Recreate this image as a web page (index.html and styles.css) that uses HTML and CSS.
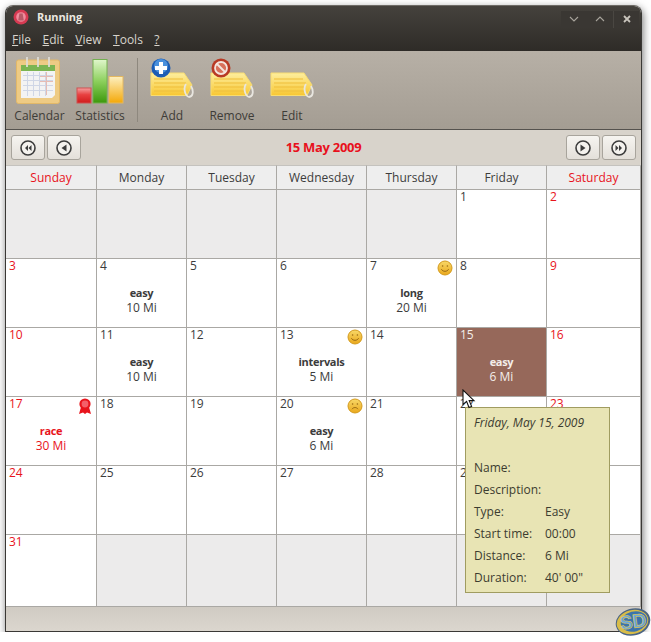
FILE: index.html
```html
<!DOCTYPE html>
<html lang="en">
<head>
    <meta charset="UTF-8">
    <meta name="viewport" content="width=device-width, initial-scale=1.0">
    <title>Running</title>
    <link rel="stylesheet" href="styles.css">
</head>
<body>
    <svg class="defs" width="0" height="0">
        <defs>
            <linearGradient id="tagFill" x1="0" y1="0" x2="0" y2="1">
                <stop offset="0" stop-color="#fdee9e"/>
                <stop offset="1" stop-color="#f8c733"/>
            </linearGradient>
            <linearGradient id="smile" x1="0" y1="0" x2="0" y2="1">
                <stop offset="0" stop-color="#f8d868"/>
                <stop offset="1" stop-color="#eaa81c"/>
            </linearGradient>
            <linearGradient id="barRed" x1="0" y1="0" x2="0" y2="1">
                <stop offset="0" stop-color="#f4a0a0"/>
                <stop offset=".45" stop-color="#e84040"/>
                <stop offset="1" stop-color="#d01c1c"/>
            </linearGradient>
            <linearGradient id="barGreen" x1="0" y1="0" x2="0" y2="1">
                <stop offset="0" stop-color="#e0f6cc"/>
                <stop offset=".5" stop-color="#8cd05c"/>
                <stop offset="1" stop-color="#3c980c"/>
            </linearGradient>
            <linearGradient id="barOrange" x1="0" y1="0" x2="0" y2="1">
                <stop offset="0" stop-color="#fdf0c0"/>
                <stop offset="1" stop-color="#f4a808"/>
            </linearGradient>
            <symbol id="tag" viewBox="0 0 44 26">
                <path d="M1 1H34L42 13L37 23.5H1Z" fill="url(#tagFill)" stroke="#f8dc70"/>
                <path d="M4 7H33M4 11H36M4 15H35M4 19H34" stroke="#efbe3a" fill="none"/>
                <path d="M36 12C33 16 35 24 39 25C43 25 44 19 41 14" fill="none" stroke="#e8e6e0" stroke-width="1.8"/>
            </symbol>
            <symbol id="happy" viewBox="0 0 16 16">
                <circle cx="8" cy="8" r="7" fill="url(#smile)" stroke="#d49a1c"/>
                <circle cx="5.6" cy="6" r=".8" fill="#9a6a14"/>
                <circle cx="10.4" cy="6" r=".8" fill="#9a6a14"/>
                <path d="M4.4 9.2C5.6 12 10.4 12 11.6 9.2" fill="none" stroke="#9a6a14"/>
            </symbol>
            <symbol id="sad" viewBox="0 0 16 16">
                <circle cx="8" cy="8" r="7" fill="url(#smile)" stroke="#d49a1c"/>
                <circle cx="5.6" cy="6" r=".8" fill="#9a6a14"/>
                <circle cx="10.4" cy="6" r=".8" fill="#9a6a14"/>
                <path d="M5 11.2C6.2 9 9.8 9 11 11.2" fill="none" stroke="#9a6a14"/>
            </symbol>
        </defs>
    </svg>

    <div class="window">
        <div class="titlebar">
            <div class="title-row">
                <svg class="app-icon" width="16" height="16" viewBox="0 0 16 16">
                    <circle cx="8" cy="8" r="7.5" fill="#d63a52"/>
                    <circle cx="8" cy="8" r="4.8" fill="#ee8c9c"/>
                    <path d="M6.4 4.5H9.6L10.8 11.5H5.2Z" fill="#b85a68"/>
                </svg>
                <span class="title">Running</span>
                <div class="win-buttons">
                    <span class="win-btn">
                        <svg width="10" height="6" viewBox="0 0 10 6"><path d="M1 1L5 5L9 1" fill="none" stroke="#a8a49c" stroke-width="1.1"/></svg>
                    </span>
                    <span class="win-btn">
                        <svg width="10" height="6" viewBox="0 0 10 6"><path d="M1 5L5 1L9 5" fill="none" stroke="#a8a49c" stroke-width="1.1"/></svg>
                    </span>
                    <span class="win-btn win-close">
                        <svg width="8" height="8" viewBox="0 0 8 8"><path d="M1 1L7 7M7 1L1 7" fill="none" stroke="#c8c4bc" stroke-width="1.8"/></svg>
                    </span>
                </div>
            </div>
            <nav class="menu">
                <span><u>F</u>ile</span>
                <span><u>E</u>dit</span>
                <span><u>V</u>iew</span>
                <span><u>T</u>ools</span>
                <span><u>?</u></span>
            </nav>
        </div>

        <div class="toolbar">
            <div class="tool tool-calendar">
                <svg class="tool-icon" width="44" height="47" viewBox="0 0 44 47">
                    <rect x=".5" y="3" width="43" height="43.5" rx="2" fill="#eecb84" stroke="#e2b868"/>
                    <rect x="5" y="8" width="34" height="6" fill="#7cb552"/>
                    <path d="M5 14H39V38L36 41H5Z" fill="#f3f3f3"/>
                    <path d="M7 18.5H37M7 23.5H37M7 28.5H37M7 33.5H37M11.5 15V39M17.5 15V39M23.5 15V39M29.5 15V39" stroke="#cfd6e6" fill="none"/>
                    <path d="M30.5 15V38M24 19.5H37M24 24.5H37" stroke="#e6bcb4" fill="none"/>
                    <path d="M11 0V10M22 0V10M33 0V10" stroke="#dedcd4" stroke-width="1.8"/>
                </svg>
                <span>Calendar</span>
            </div>
            <div class="tool tool-stats">
                <svg class="tool-icon" width="48" height="47" viewBox="0 0 48 47">
                    <rect x="1" y="31" width="14" height="15" fill="url(#barRed)" stroke="#d05050"/>
                    <rect x="17" y="2.5" width="14" height="43.5" fill="url(#barGreen)" stroke="#74b050"/>
                    <rect x="33" y="19.5" width="14" height="26.5" fill="url(#barOrange)" stroke="#e4b860"/>
                </svg>
                <span>Statistics</span>
            </div>
            <div class="tool-sep"></div>
            <div class="tool">
                <div class="tag-icon">
                    <svg class="tag-body" width="44" height="26"><use href="#tag"/></svg>
                    <svg class="tag-badge" width="20" height="20" viewBox="0 0 20 20">
                        <circle cx="10" cy="10" r="9.5" fill="#1c5cb4"/>
                        <circle cx="10" cy="8" r="7" fill="#4a90dc"/>
                        <path d="M10 4V16M4 10H16" stroke="#fff" stroke-width="4"/>
                    </svg>
                </div>
                <span>Add</span>
            </div>
            <div class="tool">
                <div class="tag-icon">
                    <svg class="tag-body" width="44" height="26"><use href="#tag"/></svg>
                    <svg class="tag-badge" width="20" height="20" viewBox="0 0 20 20">
                        <circle cx="10" cy="10" r="9.5" fill="#b83a24"/>
                        <circle cx="10" cy="10" r="6" fill="#d8705a" stroke="#f4e4dc" stroke-width="1.8"/>
                        <path d="M6 6L14 14" stroke="#f4e4dc" stroke-width="2"/>
                    </svg>
                </div>
                <span>Remove</span>
            </div>
            <div class="tool">
                <div class="tag-icon">
                    <svg class="tag-body" width="44" height="26"><use href="#tag"/></svg>
                </div>
                <span>Edit</span>
            </div>
        </div>

        <div class="navbar">
            <div class="nav-group">
                <button class="nav-btn">
                    <svg width="16" height="16" viewBox="0 0 16 16"><circle cx="8" cy="8" r="7" fill="#f4f2ee" stroke="#3c3c3c" stroke-width="1.6"/><path d="M8 5V11L5 8ZM11.5 5V11L8.5 8Z" fill="#3c3c3c"/></svg>
                </button>
                <button class="nav-btn">
                    <svg width="16" height="16" viewBox="0 0 16 16"><circle cx="8" cy="8" r="7" fill="#f4f2ee" stroke="#3c3c3c" stroke-width="1.6"/><path d="M10.5 4.5V11.5L5.5 8Z" fill="#3c3c3c"/></svg>
                </button>
            </div>
            <div class="nav-date">15 May 2009</div>
            <div class="nav-group">
                <button class="nav-btn">
                    <svg width="16" height="16" viewBox="0 0 16 16"><circle cx="8" cy="8" r="7" fill="#f4f2ee" stroke="#3c3c3c" stroke-width="1.6"/><path d="M5.5 4.5V11.5L10.5 8Z" fill="#3c3c3c"/></svg>
                </button>
                <button class="nav-btn">
                    <svg width="16" height="16" viewBox="0 0 16 16"><circle cx="8" cy="8" r="7" fill="#f4f2ee" stroke="#3c3c3c" stroke-width="1.6"/><path d="M4.5 5V11L7.5 8ZM8 5V11L11 8Z" fill="#3c3c3c"/></svg>
                </button>
            </div>
        </div>

        <div class="calendar">
            <div class="head red">Sunday</div>
            <div class="head">Monday</div>
            <div class="head">Tuesday</div>
            <div class="head">Wednesday</div>
            <div class="head">Thursday</div>
            <div class="head">Friday</div>
            <div class="head red">Saturday</div>

            <div class="cell off"></div>
            <div class="cell off"></div>
            <div class="cell off"></div>
            <div class="cell off"></div>
            <div class="cell off"></div>
            <div class="cell"><span class="day">1</span></div>
            <div class="cell red"><span class="day">2</span></div>

            <div class="cell red"><span class="day">3</span></div>
            <div class="cell"><span class="day">4</span><div class="run"><b>easy</b><span>10 Mi</span></div></div>
            <div class="cell"><span class="day">5</span></div>
            <div class="cell"><span class="day">6</span></div>
            <div class="cell">
                <span class="day">7</span>
                <svg class="mood" width="16" height="16"><use href="#happy"/></svg>
                <div class="run"><b>long</b><span>20 Mi</span></div>
            </div>
            <div class="cell"><span class="day">8</span></div>
            <div class="cell red"><span class="day">9</span></div>

            <div class="cell red"><span class="day">10</span></div>
            <div class="cell"><span class="day">11</span><div class="run"><b>easy</b><span>10 Mi</span></div></div>
            <div class="cell"><span class="day">12</span></div>
            <div class="cell">
                <span class="day">13</span>
                <svg class="mood" width="16" height="16"><use href="#happy"/></svg>
                <div class="run"><b>intervals</b><span>5 Mi</span></div>
            </div>
            <div class="cell"><span class="day">14</span></div>
            <div class="cell selected"><span class="day">15</span><div class="run"><b>easy</b><span>6 Mi</span></div></div>
            <div class="cell red"><span class="day">16</span></div>

            <div class="cell red">
                <span class="day">17</span>
                <svg class="mood ribbon" width="14" height="17" viewBox="0 0 14 17">
                    <path d="M3 9L1 16L5 14.5L7 16L9 14.5L13 16L11 9Z" fill="#e8141c"/>
                    <circle cx="7" cy="6" r="5.6" fill="#e8141c"/>
                    <circle cx="7" cy="6" r="3.4" fill="#f4606a"/>
                </svg>
                <div class="run"><b>race</b><span>30 Mi</span></div>
            </div>
            <div class="cell"><span class="day">18</span></div>
            <div class="cell"><span class="day">19</span></div>
            <div class="cell">
                <span class="day">20</span>
                <svg class="mood" width="16" height="16"><use href="#sad"/></svg>
                <div class="run"><b>easy</b><span>6 Mi</span></div>
            </div>
            <div class="cell"><span class="day">21</span></div>
            <div class="cell"><span class="day">22</span></div>
            <div class="cell red"><span class="day">23</span></div>

            <div class="cell red"><span class="day">24</span></div>
            <div class="cell"><span class="day">25</span></div>
            <div class="cell"><span class="day">26</span></div>
            <div class="cell"><span class="day">27</span></div>
            <div class="cell"><span class="day">28</span></div>
            <div class="cell"><span class="day">29</span></div>
            <div class="cell red"><span class="day">30</span></div>

            <div class="cell red"><span class="day">31</span></div>
            <div class="cell off"></div>
            <div class="cell off"></div>
            <div class="cell off"></div>
            <div class="cell off"></div>
            <div class="cell off"></div>
            <div class="cell off"></div>
        </div>

        <div class="statusbar"></div>
    </div>

    <div class="tooltip">
        <div class="tip-date">Friday, May 15, 2009</div>
        <div class="tip-rows">
            <span>Name:</span><span></span>
            <span>Description:</span><span></span>
            <span>Type:</span><span>Easy</span>
            <span>Start time:</span><span>00:00</span>
            <span>Distance:</span><span>6 Mi</span>
            <span>Duration:</span><span>40' 00"</span>
        </div>
    </div>

    <svg class="cursor" width="15" height="20" viewBox="0 0 15 20">
        <path d="M1 1V15.5L4.6 12.4L7 18.5L9.6 17.4L7.2 11.6H12Z" fill="#fff" stroke="#111" stroke-width="1.1"/>
    </svg>

    <svg class="logo" width="36" height="30" viewBox="0 0 36 30">
        <ellipse cx="18" cy="15" rx="17.5" ry="13.5" transform="rotate(-15 18 15)" fill="#4a6484"/>
        <ellipse cx="17.5" cy="15" rx="16" ry="12" transform="rotate(-15 17.5 15)" fill="#d8bc48"/>
        <ellipse cx="19" cy="14.5" rx="13.5" ry="10" transform="rotate(-15 19 14.5)" fill="#3c74ac"/>
        <text x="18" y="21" class="logo-text" transform="rotate(-8 18 15)">SD</text>
    </svg>
</body>
</html>
```

FILE: styles.css
```css
body {
    margin: 0;
    background-color: #ffffff;
    font-family: "Open Sans", sans-serif;
    font-size: 12px;
    color: #3c3c3c;
}
.defs {
    position: absolute;
}
.window {
    width: 635px;
    margin: 5px 0 0 5px;
    border: 1px solid #3a3835;
    border-top-color: #6e6b66;
    border-radius: 8px 8px 0 0;
    box-shadow: 1px 3px 8px rgba(0, 0, 0, 0.55);
}
.titlebar {
    height: 45px;
    background: linear-gradient(180deg, #45423d, #2e2b27);
    border-radius: 7px 7px 0 0;
    color: #d8d4cc;
}
.title-row {
    display: flex;
    align-items: center;
    height: 22px;
    padding: 0 0 0 7px;
}
.title {
    margin-left: 8px;
    padding-bottom: 2px;
    font-weight: bold;
    font-size: 11px;
    letter-spacing: -0.1px;
    color: #ece8e0;
}
.win-buttons {
    display: flex;
    margin: 4px 2px 0 auto;
}
.win-btn {
    display: flex;
    align-items: center;
    justify-content: center;
    width: 26px;
    height: 17px;
    background-color: #3a3733;
}
.win-close {
    border-left: 1px solid #4a4742;
    box-sizing: border-box;
}
.menu {
    display: flex;
    gap: 11.5px;
    padding: 3px 0 0 6px;
}
.toolbar {
    display: flex;
    height: 79px;
    padding-left: 3px;
    box-sizing: border-box;
    background: linear-gradient(180deg, #b7b0a6, #a49d93);
    border-bottom: 1px solid #55524e;
}
.tool {
    width: 60px;
    height: 78px;
    display: flex;
    flex-direction: column;
    align-items: center;
    box-sizing: border-box;
    padding-top: 6px;
    color: #3e3c38;
    position: relative;
}
.tool span {
    position: absolute;
    top: 56px;
}
.tool-calendar {
    width: 61px;
}
.tool-calendar .tool-icon {
    margin-right: 3px;
}
.tool-sep {
    width: 1px;
    height: 64px;
    margin: 7px 4px 0 7px;
    background-color: #8e887e;
}
.tag-icon {
    width: 44px;
    height: 41px;
    position: relative;
}
.tag-body {
    position: absolute;
    left: 0;
    top: 15px;
}
.tag-badge {
    position: absolute;
    left: 1px;
    top: 1px;
}
.navbar {
    display: flex;
    align-items: center;
    justify-content: space-between;
    height: 35px;
    padding: 0 5px;
    box-sizing: border-box;
    background-color: #d8d3cb;
}
.nav-group {
    display: flex;
    gap: 2px;
}
.nav-btn {
    width: 34px;
    height: 25px;
    padding: 0;
    display: flex;
    align-items: center;
    justify-content: center;
    background: linear-gradient(180deg, #f6f4f0, #e4e0da);
    border: 1px solid #a8a49c;
    border-radius: 3px;
}
.nav-date {
    padding-bottom: 2px;
    font-weight: bold;
    font-size: 13px;
    letter-spacing: -0.3px;
    color: #e8101c;
}
.calendar {
    display: grid;
    grid-template-columns: 91px repeat(5, 90px) 94px;
    grid-template-rows: 25px repeat(5, 69px) 72px;
    background-color: #ffffff;
}
.head {
    display: flex;
    align-items: center;
    justify-content: center;
    background-color: #eeeeee;
    border-top: 1px solid #c4c2be;
    border-right: 1px solid #aaa8a4;
    border-bottom: 1px solid #aaa8a4;
    padding-bottom: 1px;
    box-sizing: border-box;
}
.cell {
    position: relative;
    border-right: 1px solid #aaa8a4;
    border-bottom: 1px solid #aaa8a4;
    box-sizing: border-box;
}
.day {
    display: block;
    padding-left: 3px;
    line-height: 14px;
}
.run {
    display: flex;
    flex-direction: column;
    align-items: center;
    margin-top: 12px;
    line-height: 15px;
}
.run b {
    font-size: 11px;
    letter-spacing: -0.3px;
}
.off {
    background-color: #ecebeb;
}
.red {
    color: #e8141c;
}
.selected {
    background-color: #96685a;
    color: #f4eeea;
}
.mood {
    position: absolute;
    top: 1px;
    right: 3px;
}
.ribbon {
    right: 4px;
}
.statusbar {
    height: 24px;
    background: linear-gradient(180deg, #d0cbc3, #dbd6ce);
}
.tooltip {
    position: absolute;
    left: 465px;
    top: 407px;
    width: 145px;
    height: 186px;
    box-sizing: border-box;
    padding: 7px 8px;
    background-color: #e8e4b4;
    border: 1px solid #a09c60;
    color: #3c3c30;
}
.tip-date {
    font-style: italic;
    line-height: 16px;
}
.tip-rows {
    display: grid;
    grid-template-columns: 71px 1fr;
    grid-auto-rows: 22px;
    align-items: center;
    margin-top: 25px;
}
.cursor {
    position: absolute;
    left: 462px;
    top: 389px;
}
.logo {
    position: absolute;
    left: 615px;
    top: 607px;
}
.logo-text {
    font-family: "Liberation Sans", sans-serif;
    font-weight: bold;
    font-size: 19px;
    text-anchor: middle;
    fill: #6aa8dc;
    stroke: #e0c850;
    stroke-width: 0.6px;
}
```
